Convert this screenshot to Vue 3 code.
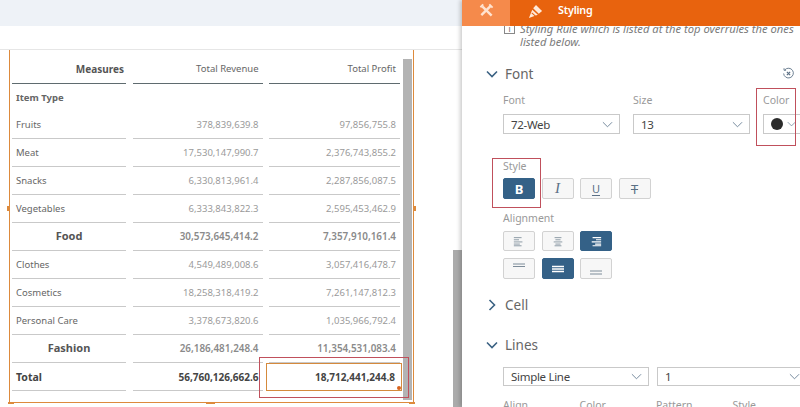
<script setup>
const rows = [
  { name: 'Fruits', rev: '378,839,639.8', profit: '97,856,755.8' },
  { name: 'Meat', rev: '17,530,147,990.7', profit: '2,376,743,855.2' },
  { name: 'Snacks', rev: '6,330,813,961.4', profit: '2,287,856,087.5' },
  { name: 'Vegetables', rev: '6,333,843,822.3', profit: '2,595,453,462.9' },
  { name: 'Food', rev: '30,573,645,414.2', profit: '7,357,910,161.4', sub: true },
  { name: 'Clothes', rev: '4,549,489,008.6', profit: '3,057,416,478.7' },
  { name: 'Cosmetics', rev: '18,258,318,419.2', profit: '7,261,147,812.3' },
  { name: 'Personal Care', rev: '3,378,673,820.6', profit: '1,035,966,792.4' },
  { name: 'Fashion', rev: '26,186,481,248.4', profit: '11,354,531,083.4', sub: true },
]
</script>

<template>
  <div class="page">
    <div class="canvas">
      <div class="topband"></div>
      <div class="sheet">
        <div class="frame">
          <div class="table">
            <div class="row head">
              <div class="cell name measures">Measures</div>
              <div class="cell">Total Revenue</div>
              <div class="cell">Total Profit</div>
            </div>
            <div class="row group">
              <div class="cell name">Item Type</div>
            </div>
            <div v-for="r in rows" :key="r.name" class="row" :class="{ sub: r.sub }">
              <div class="cell name">{{ r.name }}</div>
              <div class="cell">{{ r.rev }}</div>
              <div class="cell">{{ r.profit }}</div>
            </div>
            <div class="row total">
              <div class="cell name">Total</div>
              <div class="cell">56,760,126,662.6</div>
              <div class="cell picked">18,712,441,244.8<span class="dot"></span></div>
            </div>
          </div>
          <div class="scroll"></div>
          <div class="redbox cell-mark"></div>
          <i class="handle h-left"></i>
          <i class="handle h-right"></i>
          <i class="handle h-bottom"></i>
          <i class="handle h-bl"></i>
          <i class="handle h-br"></i>
        </div>
      </div>
      <div class="strip"></div>
    </div>

    <div class="panel">
      <div class="tabs">
        <div class="tab-tool">
          <svg viewBox="0 0 16 16" width="15" height="15" fill="none" stroke="#ffe3d0" stroke-width="2.600">
            <path d="M3.500 3.500l10 10" />
            <path d="M12.500 3l-10 10" />
            <path d="M1.500 4.500l3-3" stroke-width="2" />
            <path d="M11 1.500l3.500 3.500" stroke-width="2" />
          </svg>
        </div>
        <svg class="tab-icon" viewBox="0 0 16 16" width="15" height="15">
          <path d="M1 15l3.500-9 6 5.500z" fill="#ffe9d8" />
          <path d="M5.500 4.500l3-3.500 6.500 6.500-3.500 3z" fill="#ffe9d8" />
          <path d="M4 9.500l4 3.500" stroke="#e8630e" stroke-width="1.200" fill="none" />
        </svg>
        <span class="tab-label">Styling</span>
      </div>

      <div class="body">
        <div class="note">
          <span class="note-icon">i</span>
          <p>Styling Rule which is listed at the top overrules the ones listed below.</p>
        </div>

        <div class="section font-head">
          <svg class="chev" viewBox="0 0 12 8" width="12" height="8"><path d="M1 1.500l5 5 5-5" /></svg>
          <span>Font</span>
          <svg class="reset" viewBox="0 0 16 16" width="13" height="13" fill="none" stroke="#5b7085" stroke-width="1.100">
            <path d="M3.500 3.500A6 6 0 1 1 2 8" />
            <path d="M2.500 1.500v2.500h2.500" />
            <path d="M6 6l4 4M10 6l-4 4" stroke-width="1.500" />
          </svg>
        </div>

        <div class="font-row">
          <div class="field w-font">
            <label>Font</label>
            <div class="select"><span>72-Web</span><svg viewBox="0 0 12 7" width="11" height="7"><path d="M1 1l5 5 5-5" /></svg></div>
          </div>
          <div class="field w-size">
            <label>Size</label>
            <div class="select"><span>13</span><svg viewBox="0 0 12 7" width="11" height="7"><path d="M1 1l5 5 5-5" /></svg></div>
          </div>
          <div class="field w-color">
            <label>Color</label>
            <div class="select color"><i class="swatch"></i><svg viewBox="0 0 12 7" width="9" height="6"><path d="M1 1l5 5 5-5" /></svg></div>
          </div>
        </div>

        <label class="small-label">Style</label>
        <div class="btns style-row">
          <div class="btn on bold">B</div>
          <div class="btn ital">I</div>
          <div class="btn under">U</div>
          <div class="btn strike">T</div>
        </div>

        <label class="small-label align-label">Alignment</label>
        <div class="btns align-row">
          <div class="btn"><svg viewBox="0 0 14 12" width="12" height="11"><path d="M1 1.500h9M1 4h6M1 6.500h10M1 9h7M1 11h9" /></svg></div>
          <div class="btn"><svg viewBox="0 0 14 12" width="12" height="11"><path d="M3 1.500h8M4 4h6M2 6.500h10M4 9h6M3 11h8" /></svg></div>
          <div class="btn on"><svg viewBox="0 0 14 12" width="12" height="11"><path d="M3 1.500h10M7 4h6M2 6.500h11M6 9h7M3 11h10" /></svg></div>
        </div>
        <div class="btns second">
          <div class="btn"><svg viewBox="0 0 14 12" width="14" height="12"><path d="M1 1h12M1 3.500h12" /></svg></div>
          <div class="btn on"><svg viewBox="0 0 14 12" width="14" height="12"><path d="M1 3.500h12M1 6h12M1 8.500h12" /></svg></div>
          <div class="btn"><svg viewBox="0 0 14 12" width="14" height="12"><path d="M1 8h12M1 11h12" /></svg></div>
        </div>

        <div class="section cell-head">
          <svg class="chev" viewBox="0 0 8 12" width="8" height="12"><path d="M1.500 1l5 5-5 5" /></svg>
          <span>Cell</span>
        </div>

        <div class="section lines-head">
          <svg class="chev" viewBox="0 0 12 8" width="12" height="8"><path d="M1 1.500l5 5 5-5" /></svg>
          <span>Lines</span>
        </div>

        <div class="line-row">
          <div class="select w-line"><span>Simple Line</span><svg viewBox="0 0 12 7" width="11" height="7"><path d="M1 1l5 5 5-5" /></svg></div>
          <div class="select w-width"><span>1</span><svg viewBox="0 0 12 7" width="11" height="7"><path d="M1 1l5 5 5-5" /></svg></div>
        </div>
        <div class="line-labels">
          <label>Align</label><label>Color</label><label>Pattern</label><label>Style</label>
        </div>
      </div>

      <div class="redbox color-mark"></div>
      <div class="redbox style-mark"></div>
    </div>
  </div>
</template>

<style scoped>
.page {
  width: 800px;
  height: 407px;
  display: flex;
  overflow: hidden;
  font-family: "Noto Sans", "Open Sans", sans-serif;
  background: #fff;
}

.canvas {
  position: relative;
  width: 462px;
  flex: none;
}

.topband {
  height: 26px;
  background: #eef2f7;
}

.sheet {
  margin-top: 23px;
  border-top: 1px solid #e6e6e6;
  padding-left: 9px;
}

.frame {
  position: relative;
  width: 405px;
  height: 353px;
  box-sizing: border-box;
  border: 1px solid #dd8a3c;
  border-top: none;
  padding: 6px 0 0 2px;
  background: #fff;
}

.row {
  display: grid;
  grid-template-columns: 114px 130px 131px;
  column-gap: 6.500px;
  height: 28px;
  width: 389px;
  color: #9a9a9a;
  font-size: 9.500px;
}

.row .cell {
  display: flex;
  align-items: center;
  justify-content: flex-end;
  padding: 0 4px 0 0;
  border-bottom: 1px solid #c9c9c9;
}

.row .cell.name {
  justify-content: flex-start;
  padding-left: 4px;
  color: #666;
}

.head {
  color: #666;
}

.row.head .cell {
  padding-bottom: 2px;
  border-bottom: 1px solid #5f6b6f;
}

.row.head .cell.measures {
  justify-content: flex-end;
  padding-right: 2px;
  font-size: 10px;
  font-weight: 700;
  color: #555;
}

.group {
  height: 27px;
}

.group .cell {
  border-bottom: none;
  font-weight: 700;
  color: #555;
}

.sub {
  color: #8a8a8a;
  font-size: 9.900px;
  font-weight: 600;
}

.row.sub .cell {
  padding-bottom: 2px;
}

.row.sub .cell.name {
  justify-content: center;
  padding-left: 0;
  padding-right: 0;
  font-size: 11px;
  font-weight: 700;
  color: #555;
}

.total {
  font-size: 10px;
  font-weight: 700;
  color: #444;
}

.total .cell.name {
  color: #444;
  font-weight: 700;
  font-size: 10.500px;
}

.row.total .picked {
  position: relative;
  margin: 0 -2px 0 -3px;
  padding-right: 6px;
  border: 1px solid #d58a3c;
}

.dot {
  position: absolute;
  right: 0;
  bottom: 0;
  width: 4px;
  height: 4px;
  border-radius: 50%;
  background: #d9641e;
}

.scroll {
  position: absolute;
  right: 1px;
  top: 9px;
  bottom: 2px;
  width: 9px;
  background: #b3b3b3;
}

.handle {
  position: absolute;
  background: #dd8a3c;
}

.h-left {
  left: -3px;
  top: 156px;
  width: 3px;
  height: 5px;
}

.h-right {
  right: -3px;
  top: 156px;
  width: 3px;
  height: 5px;
}

.h-bottom {
  left: 196px;
  bottom: -2px;
  width: 9px;
  height: 2px;
}

.h-bl {
  left: -2px;
  bottom: -2px;
  width: 6px;
  height: 2px;
}

.h-br {
  right: -2px;
  bottom: -2px;
  width: 6px;
  height: 2px;
}

.strip {
  position: absolute;
  left: 453px;
  right: 0;
  top: 250px;
  bottom: 0;
  background: #ababab;
}

.redbox {
  position: absolute;
  border: 1px solid #c0505c;
  pointer-events: none;
}

.cell-mark {
  left: 249px;
  top: 307px;
  width: 148px;
  height: 39px;
}

.panel {
  position: relative;
  flex: 1;
  box-shadow: -2px 0 4px rgba(0, 0, 0, 0.2);
  background: #fff;
  overflow: hidden;
}

.tabs {
  display: flex;
  align-items: center;
  height: 26px;
  background: #e8630e;
}

.tab-tool {
  width: 48px;
  height: 26px;
  padding-bottom: 5px;
  box-sizing: border-box;
  display: flex;
  align-items: center;
  justify-content: center;
  background: #f58a4b;
}

.tab-icon {
  margin: -4px 0 0 18px;
}

.tab-label {
  margin-left: 15px;
  margin-top: -7px;
  color: #fff;
  font-size: 10.800px;
  font-weight: 600;
  letter-spacing: -0.200px;
}

.body {
  padding: 0 0 0 41px;
  color: #666;
}

.note {
  position: relative;
  height: 38px;
  overflow: hidden;
}

.note p {
  margin: -4px 0 0 17px;
  width: 290px;
  font-size: 11.200px;
  line-height: 13px;
  font-style: italic;
  color: #7a7a7a;
}

.note-icon {
  position: absolute;
  left: 1px;
  top: -3px;
  width: 9px;
  height: 9px;
  border: 1px solid #888;
  font-size: 8px;
  line-height: 9px;
  text-align: center;
  color: #666;
}

.section {
  display: flex;
  align-items: center;
  position: relative;
  font-size: 13.500px;
  color: #666;
}

.section span {
  margin-left: 7px;
}

.chev {
  margin-left: -17px;
  fill: none;
  stroke: #3b6283;
  stroke-width: 1.600;
}

.font-head {
  height: 20px;
}

.reset {
  position: absolute;
  right: 5px;
  top: 3px;
}

.font-row {
  display: flex;
  margin-top: 9px;
}

.field {
  flex: none;
}

.field label,
.small-label,
.line-labels label {
  display: block;
  font-size: 10.500px;
  color: #999;
}

.field label {
  height: 21px;
}

.w-font,
.w-size {
  width: 130px;
}

.w-font .select,
.w-size .select {
  width: 117px;
}

.select {
  display: flex;
  align-items: center;
  justify-content: space-between;
  box-sizing: border-box;
  height: 20px;
  padding: 0 6px 0 7px;
  border: 1px solid #c9c9c9;
  font-size: 11.500px;
  letter-spacing: -0.300px;
  color: #444;
  background: #fff;
}

.select svg {
  fill: none;
  stroke: #6b8196;
  stroke-width: 1;
  flex: none;
}

.color {
  width: 60px;
  justify-content: flex-start;
  gap: 4px;
}

.swatch {
  width: 12px;
  height: 12px;
  border-radius: 50%;
  background: #2b2b2b;
}

.small-label {
  margin-top: 25px;
  height: 14px;
}

.align-label {
  margin-top: 12px;
}

.btns {
  display: flex;
  gap: 6.500px;
  margin-top: 6px;
}

.style-row {
  margin-top: 5px;
}

.style-row .btn,
.second .btn {
  height: 21px;
}

.btns.second {
  margin-top: 7px;
}

.btn {
  box-sizing: border-box;
  width: 32px;
  height: 20px;
  display: flex;
  align-items: center;
  justify-content: center;
  border: 1px solid #d2d2d2;
  border-radius: 2px;
  background: #f7f7f7;
  color: #5b7085;
  font-size: 11px;
}

.btn svg {
  fill: none;
  stroke: #7d8c99;
  stroke-width: 1;
}

.btn.on {
  background: #346187;
  border-color: #346187;
  color: #fff;
}

.btn.on svg {
  stroke: #fff;
  stroke-width: 1.300;
}

.bold {
  font-weight: 700;
  font-size: 13px;
}

.ital {
  font-style: italic;
  font-family: "Liberation Serif", serif;
  font-size: 15px;
}

.under {
  text-decoration: underline;
  text-underline-offset: 2px;
}

.strike {
  font-size: 13px;
  text-decoration: line-through;
}

.cell-head {
  margin-top: 16px;
  height: 20px;
}

.cell-head .chev {
  margin-left: -15px;
}

.cell-head span {
  margin-left: 9px;
}

.lines-head {
  margin-top: 20px;
  height: 20px;
}

.line-row {
  display: flex;
  gap: 8px;
  margin-top: 12px;
}

.line-row .select {
  flex: none;
  height: 19px;
}

.w-line {
  width: 146px;
}

.w-width {
  width: 150px;
}

.line-labels {
  display: flex;
  margin-top: 12px;
}

.line-labels label {
  flex: none;
  width: 76.500px;
  line-height: 14px;
}

.color-mark {
  left: 294px;
  top: 88px;
  width: 38px;
  height: 56px;
}

.style-mark {
  left: 30px;
  top: 158px;
  width: 47px;
  height: 48px;
}
</style>
